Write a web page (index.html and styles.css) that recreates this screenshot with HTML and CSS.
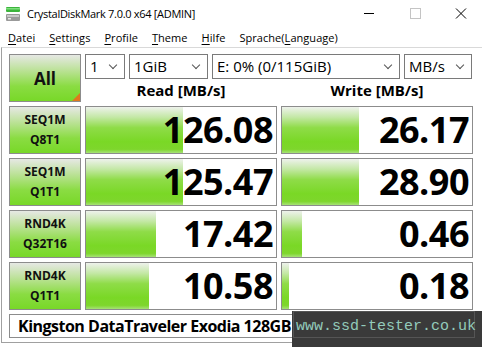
FILE: index.html
```html
<!DOCTYPE html>
<html lang="de">
<head>
    <meta charset="UTF-8">
    <title>CrystalDiskMark 7.0.0 x64 [ADMIN]</title>
    <link rel="stylesheet" href="styles.css">
</head>
<body>
<div class="window">
    <div class="titlebar">
        <svg class="app-icon" width="16" height="16" viewBox="0 0 16 16">
            <rect x="1" y="1" width="14" height="5" rx="1" fill="#3cb43c"/>
            <rect x="1" y="2" width="14" height="1.5" fill="#7fe07f"/>
            <rect x="1" y="8" width="14" height="7" rx="1" fill="#9a9a9a"/>
            <rect x="2" y="9" width="12" height="2" fill="#c8c8c8"/>
            <rect x="3" y="12" width="3" height="1.5" fill="#e8e8e8"/>
        </svg>
        <span class="title">CrystalDiskMark 7.0.0 x64 [ADMIN]</span>
        <div class="controls">
            <svg width="46" height="27" viewBox="0 0 46 27"><path d="M18 13.5h10" stroke="#000" stroke-width="1"/></svg>
            <svg width="46" height="27" viewBox="0 0 46 27"><rect x="18.5" y="8.5" width="10" height="10" fill="none" stroke="#c4c4c4"/></svg>
            <svg width="46" height="27" viewBox="0 0 46 27"><path d="M18 8.5l10 10M28 8.5l-10 10" stroke="#000" stroke-width="1"/></svg>
        </div>
    </div>
    <div class="menubar">
        <span><u>D</u>atei</span>
        <span><u>S</u>ettings</span>
        <span><u>P</u>rofile</span>
        <span><u>T</u>heme</span>
        <span><u>H</u>ilfe</span>
        <span>Sprache(<u>L</u>anguage)</span>
    </div>
    <div class="client">
        <div class="board">
            <div class="btn all">All<span class="corner"></span></div>
            <div class="top">
                <div class="selects">
                    <div class="select s-count">1<span class="chev"></span></div>
                    <div class="select s-size">1GiB<span class="chev"></span></div>
                    <div class="select s-drive">E: 0% (0/115GiB)<span class="chev"></span></div>
                    <div class="select s-unit">MB/s<span class="chev"></span></div>
                </div>
                <div class="heads">
                    <div class="head">Read [MB/s]</div>
                    <div class="head">Write [MB/s]</div>
                </div>
            </div>

            <div class="btn label">SEQ1M<br>Q8T1</div>
            <div class="cell"><div class="bar" style="width: 97px"></div><div class="num">126.08</div></div>
            <div class="cell"><div class="bar" style="width: 77px"></div><div class="num">26.17</div></div>

            <div class="btn label">SEQ1M<br>Q1T1</div>
            <div class="cell"><div class="bar" style="width: 97px"></div><div class="num">125.47</div></div>
            <div class="cell"><div class="bar" style="width: 77px"></div><div class="num">28.90</div></div>

            <div class="btn label">RND4K<br>Q32T16</div>
            <div class="cell"><div class="bar" style="width: 70px"></div><div class="num">17.42</div></div>
            <div class="cell"><div class="bar" style="width: 20px"></div><div class="num">0.46</div></div>

            <div class="btn label">RND4K<br>Q1T1</div>
            <div class="cell"><div class="bar" style="width: 63px"></div><div class="num">10.58</div></div>
            <div class="cell"><div class="bar" style="width: 7px"></div><div class="num">0.18</div></div>
        </div>
        <div class="name">Kingston DataTraveler Exodia 128GB</div>
        <div class="watermark"><span>www.ssd-tester.co.uk</span></div>
    </div>
</div>
</body>
</html>
```

FILE: styles.css
```css
body {
    margin: 0;
    background: #fff;
    font-family: "Open Sans", "Noto Sans", sans-serif;
    color: #000;
}

.window {
    width: 482px;
    height: 347px;
    overflow: hidden;
    background: #fff;
}

.titlebar {
    height: 27px;
    display: flex;
    align-items: center;
}

.app-icon {
    margin: 0 6px 0 5px;
}

.title {
    font-size: 11px;
    letter-spacing: -0.3px;
    flex: 1;
}

.controls {
    display: flex;
    margin-right: -2px;
}

.menubar {
    height: 20px;
    display: flex;
    align-items: center;
    font-size: 11px;
    padding-left: 1px;
}

.menubar span {
    padding: 0 7px;
    letter-spacing: 0.05px;
}

.menubar u {
    text-decoration-thickness: 1px;
    text-underline-offset: 2px;
}

.client {
    position: relative;
    height: 296px;
    margin-left: 1px;
    border-top: 1px solid #d9d9d9;
    border-left: 1px solid #a0a0a0;
    border-bottom: 1px solid #a0a0a0;
    padding: 6px 0 0 7px;
    box-sizing: border-box;
}

.board {
    display: grid;
    grid-template-columns: 72px 192px 192px;
    grid-template-rows: 48px repeat(4, 48px);
    gap: 4px;
}

.top {
    grid-column: 2 / 4;
    display: flex;
    flex-direction: column;
}

.selects {
    display: flex;
    gap: 4px;
    height: 25px;
}

.select {
    border: 1px solid #7a7a7a;
    background: #fff;
    font-size: 15px;
    line-height: 23px;
    padding-left: 4px;
    display: flex;
    justify-content: space-between;
    align-items: center;
    box-sizing: border-box;
}

.chev {
    width: 5px;
    height: 5px;
    border-right: 1px solid #555;
    border-bottom: 1px solid #555;
    transform: rotate(45deg);
    margin: -4px 8px 0 0;
}

.s-count { width: 40px; }
.s-size { width: 79px; }
.s-drive { width: 188px; }
.s-unit { width: 68px; }

.heads {
    flex: 1;
    display: grid;
    grid-template-columns: 192px 192px;
    gap: 4px;
}

.head {
    text-align: center;
    font-weight: bold;
    font-size: 15px;
    line-height: 23px;
}

.btn {
    border: 1px solid #8c8c8c;
    box-sizing: border-box;
    background: linear-gradient(to bottom, #e6e8e4 0%, #bde29a 32%, #8adc42 68%, #78d828 100%);
    display: flex;
    align-items: center;
    justify-content: center;
    text-align: center;
    font-weight: bold;
    color: #111;
}

.all {
    position: relative;
    font-size: 17px;
}

.corner {
    position: absolute;
    right: 0;
    bottom: 0;
    width: 0;
    height: 0;
    border-left: 8px solid transparent;
    border-bottom: 8px solid #e0781e;
}

.label {
    font-size: 12px;
    line-height: 20px;
}

.cell {
    border: 1px solid #8c8c8c;
    box-sizing: border-box;
    background: #fff;
    display: grid;
}

.bar,
.num {
    grid-area: 1 / 1;
}

.bar {
    height: 100%;
    background: linear-gradient(to bottom, #eef2ec 0%, #c4e8a6 22%, #8fdc48 45%, #7ad826 75%, #7ed62c 92%, #a6e276 100%);
}

.num {
    justify-self: end;
    align-self: center;
    font-size: 36px;
    font-weight: bold;
    padding-right: 3px;
    line-height: 46px;
    letter-spacing: -0.5px;
}

.name {
    margin-top: 4px;
    width: 464px;
    height: 24px;
    border: 1px solid #8c8c8c;
    box-sizing: border-box;
    font-size: 16px;
    font-weight: bold;
    line-height: 22px;
    padding-left: 8px;
    letter-spacing: -0.5px;
    white-space: nowrap;
    overflow: hidden;
}

.watermark {
    position: absolute;
    left: 290px;
    top: 263px;
    width: 200px;
    height: 40px;
    background: #3a3a3a;
    padding: 0 0 0 1px;
}

.watermark span {
    display: block;
    width: 178px;
    height: 25px;
    border: 1px solid #555;
    font-family: "Liberation Mono", monospace;
    font-size: 15px;
    line-height: 30px;
    color: #93cbbb;
    padding-left: 2px;
    white-space: nowrap;
}
```
